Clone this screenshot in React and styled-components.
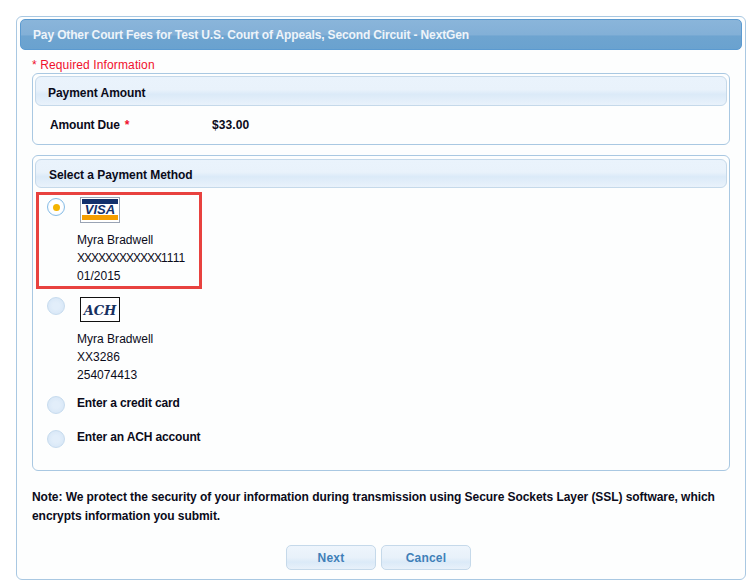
import React from 'react';
import styled, { createGlobalStyle } from 'styled-components';

const GlobalStyle = createGlobalStyle`
  html, body {
    margin: 0;
    background: #fff;
    font-family: "Liberation Sans", Arial, sans-serif;
    font-size: 12px;
    color: #0b0b1a;
  }
`;

const Page = styled.div`
  width: 756px;
  height: 588px;
  box-sizing: border-box;
  padding: 16px 0 0 16px;
  overflow: hidden;
`;

const Card = styled.div`
  box-sizing: border-box;
  width: 730px;
  height: 564px;
  padding: 2px 2px 0 3px;
  background: #fdfefe;
  border: 1px solid #a9c8e2;
  border-radius: 6px;
`;

const TitleBar = styled.div`
  box-sizing: border-box;
  height: 31px;
  width: 722px;
  padding-left: 12px;
  display: flex;
  align-items: center;
  color: #eef4fa;
  font-weight: bold;
  font-size: 12px;
  letter-spacing: -0.14px;
  border: 1px solid #5b9ad0;
  border-radius: 5px;
  background: linear-gradient(to bottom, #8ab5da 0%, #83b0d7 50%, #6ea4d0 56%, #6aa2cf 100%);
`;

const Body = styled.div`
  padding: 0 12px;
`;

const Required = styled.div`
  color: #f0102c;
  height: 23px;
  line-height: 15px;
  padding-top: 8px;
  box-sizing: border-box;
  font-size: 12px;
  letter-spacing: 0.12px;
`;

const Panel = styled.section`
  box-sizing: border-box;
  width: 698px;
  height: ${props => props.height}px;
  margin-bottom: 10px;
  padding: ${props => props.top}px 2px 0;
  border: 1px solid #a9c8e2;
  border-radius: 6px;
`;

const PanelHeader = styled.h2`
  box-sizing: border-box;
  margin: 0;
  height: ${props => props.height}px;
  padding: ${props => props.drop}px 0 0 ${props => props.inset}px;
  display: flex;
  align-items: center;
  font-size: 12px;
  font-weight: bold;
  letter-spacing: -0.05px;
  border: 1px solid #c5d9ea;
  border-radius: 6px;
  background: linear-gradient(to bottom, #eaf3fc 0%, #e9f2fb 45%, #dbeaf8 62%, #e9f2fb 100%);
`;

const AmountRow = styled.div`
  display: flex;
  padding: 12px 0 0 15px;
  font-weight: bold;
  line-height: 15px;
`;

const AmountLabel = styled.span`
  width: 162px;
  letter-spacing: -0.15px;
`;

const Amount = styled.span`
  letter-spacing: 0.1px;
`;

const Star = styled.span`
  color: #f0102c;
  margin-left: 5px;
`;

const Highlight = styled.div`
  box-sizing: border-box;
  width: 166px;
  height: 97px;
  margin: 4px 0 0 1px;
  padding: 2px 0 0 8px;
  border: 3px solid #e8423f;
`;

const Method = styled.div`
  display: flex;
  align-items: flex-start;
  gap: ${props => props.gap}px;
  margin: ${props => props.margin || 0};
`;

const Radio = styled.span`
  box-sizing: border-box;
  flex: none;
  width: 18px;
  height: 18px;
  border-radius: 50%;
  display: flex;
  align-items: center;
  justify-content: center;
  margin-top: ${props => props.top || 0}px;
  border: 1px solid ${props => (props.checked ? '#86bce6' : '#c6dbee')};
  background: ${props => (props.checked ? 'radial-gradient(circle, #fff 55%, #e3effa 100%)' : 'radial-gradient(circle, #e2eefa 30%, #d3e4f5 100%)')};

  &::after {
    content: '';
    display: ${props => (props.checked ? 'block' : 'none')};
    width: 7px;
    height: 7px;
    border-radius: 50%;
    background: #f4b400;
  }
`;

const MethodInfo = styled.div`
  display: flex;
  flex-direction: column;
  align-items: flex-start;
`;

const Lines = styled.div`
  margin: 8px 0 0 -3px;
  line-height: 18px;
  letter-spacing: 0.02px;
`;

const Masked = styled.span`
  letter-spacing: -1px;
`;

const OptionLabel = styled.div`
  font-weight: bold;
  line-height: 15px;
  letter-spacing: -0.14px;
`;

const Logo = styled.svg`
  display: block;
`;

const VisaText = styled.text`
  font-family: "Liberation Sans", sans-serif;
  font-weight: bold;
  font-style: italic;
  font-size: 13px;
  fill: #12306b;
`;

const AchText = styled.text`
  font-family: "DejaVu Serif", serif;
  font-weight: bold;
  font-style: italic;
  font-size: 13px;
  fill: #17305f;
`;

const Note = styled.p`
  margin: 17px 0 0;
  width: 699px;
  font-weight: bold;
  line-height: 19px;
  letter-spacing: -0.06px;
`;

const Actions = styled.div`
  display: flex;
  gap: 5px;
  margin: 19px 0 0 254px;
`;

const Button = styled.button`
  box-sizing: border-box;
  width: 90px;
  height: 25px;
  padding: 0;
  font-family: inherit;
  font-size: 12px;
  font-weight: bold;
  letter-spacing: 0.2px;
  color: #3f7fb8;
  border: 1px solid #c5d9ea;
  border-radius: 5px;
  background: linear-gradient(to bottom, #eef5fc 0%, #e8f1fa 50%, #dbeaf8 70%, #e8f1fa 100%);
`;

const VisaLogo = () => (
  <Logo width="40" height="26" viewBox="0 0 40 26">
    <rect x="0.5" y="0.5" width="39" height="25" fill="#fff" stroke="#9aa4b4" />
    <rect x="2" y="2" width="36" height="5" fill="#12306b" />
    <rect x="2" y="18" width="36" height="5" fill="#f59e00" />
    <VisaText x="20" y="17" textAnchor="middle">VISA</VisaText>
  </Logo>
);

const AchLogo = () => (
  <Logo width="40" height="25" viewBox="0 0 40 25">
    <rect x="0.5" y="0.5" width="39" height="24" fill="#fff" stroke="#111" />
    <AchText x="20" y="17.5" textAnchor="middle">ACH</AchText>
  </Logo>
);

const App = () => (
  <Page>
    <GlobalStyle />
    <Card>
      <TitleBar>Pay Other Court Fees for Test U.S. Court of Appeals, Second Circuit - NextGen</TitleBar>
      <Body>
        <Required>* Required Information</Required>
        <Panel height={72} top={2}>
          <PanelHeader height={30} inset={12} drop={3}>Payment Amount</PanelHeader>
          <AmountRow>
            <AmountLabel>
              Amount Due<Star>*</Star>
            </AmountLabel>
            <Amount>$33.00</Amount>
          </AmountRow>
        </Panel>
        <Panel height={316} top={3}>
          <PanelHeader height={29} inset={13} drop={2}>Select a Payment Method</PanelHeader>
          <Highlight>
            <Method gap={15}>
              <Radio checked top={1} />
              <MethodInfo>
                <VisaLogo />
                <Lines>
                  Myra Bradwell
                  <br />
                  <Masked>XXXXXXXXXXXX</Masked>1111
                  <br />
                  01/2015
                </Lines>
              </MethodInfo>
            </Method>
          </Highlight>
          <Method gap={15} margin="8px 0 0 12px">
            <Radio />
            <MethodInfo>
              <AchLogo />
              <Lines>
                Myra Bradwell
                <br />
                XX3286
                <br />
                254074413
              </Lines>
            </MethodInfo>
          </Method>
          <Method gap={12} margin="12px 0 0 12px">
            <Radio />
            <OptionLabel>Enter a credit card</OptionLabel>
          </Method>
          <Method gap={12} margin="16px 0 0 12px">
            <Radio />
            <OptionLabel>Enter an ACH account</OptionLabel>
          </Method>
        </Panel>
        <Note>
          Note: We protect the security of your information during transmission using Secure Sockets Layer (SSL) software, which encrypts information you submit.
        </Note>
        <Actions>
          <Button>Next</Button>
          <Button>Cancel</Button>
        </Actions>
      </Body>
    </Card>
  </Page>
);

export default App;
